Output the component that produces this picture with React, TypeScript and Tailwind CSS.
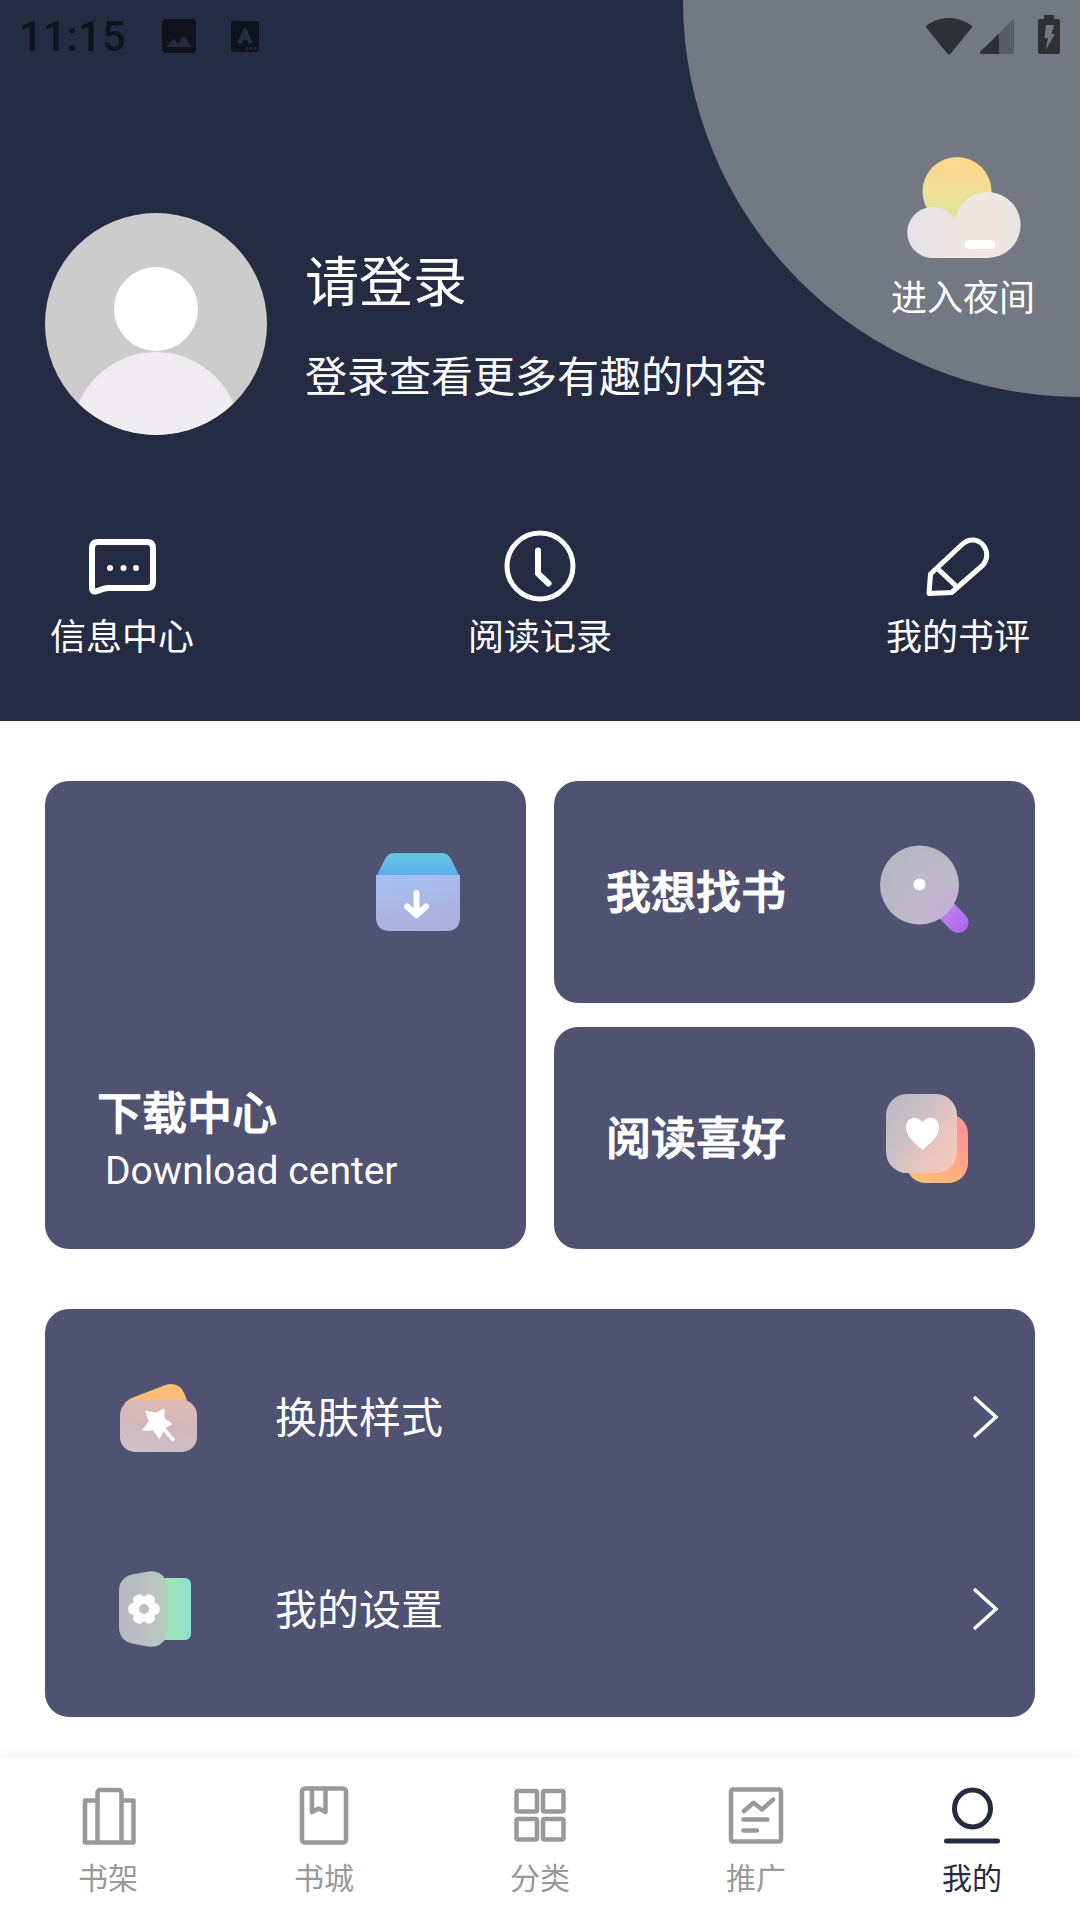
import { useState, type ReactNode } from "react";

function StatusBar() {
  return (
    <div className="flex h-[74px] items-center justify-between px-5">
      <div className="-ml-px flex items-center text-[#10121c]">
        <span className="w-[143px] text-[42px] font-medium leading-[48px]">11:15</span>
        <svg width="34" height="34" viewBox="0 1 34 34" className="overflow-visible">
          <path
            fill="currentColor"
            fillRule="evenodd"
            d="M4 0h26a4 4 0 0 1 4 4v26a4 4 0 0 1-4 4H4a4 4 0 0 1-4-4V4a4 4 0 0 1 4-4Zm.5 28h25L22 17.500l-6 7.500-4.500-5.500Z"
          />
        </svg>
        <svg className="ml-[35px] overflow-visible" width="28" height="31" viewBox="0 1 28 31">
          <rect width="28" height="31" rx="3" fill="currentColor" />
          <path d="M9 21 14 9l5 12M10.500 17h7" fill="none" stroke="#272c45" strokeWidth="4" strokeLinecap="round" strokeLinejoin="round" />
          <path d="M15 26h2.500v2.500H15ZM19 26h2.500v2.500H19ZM23 26h2.500v2.500H23Z" fill="#272c45" />
        </svg>
      </div>
      <div className="flex items-center text-[#2e3034]">
        <svg width="46" height="37" viewBox="0 1 46 37" className="overflow-visible">
          <path fill="currentColor" d="M.6 7.500C14-2.500 32-2.500 45.400 7.500c.8.700.8 1.500.3 2.200L24.500 35.700c-.8 1-2.200 1-3 0L.3 9.700C-.2 9-.2 8.200.6 7.500Z" />
        </svg>
        <svg className="ml-2" width="34" height="34" viewBox="0 0 34 34">
          <path fill="#575c66" d="M19 13.500 31.500.8c1-1 2.500-.4 2.500.9V32a2 2 0 0 1-2 2H19Z" />
          <path fill="currentColor" d="M19 13.500V34H1.500C0 34-.5 32.500.5 31.500Z" />
        </svg>
        <svg className="ml-6 overflow-visible" width="22" height="39" viewBox="0 3 22 39">
          <path fill="currentColor" d="M6 0h10v4h4a2 2 0 0 1 2 2v31a2 2 0 0 1-2 2H2a2 2 0 0 1-2-2V6a2 2 0 0 1 2-2h4Z" />
          <path fill="#737882" d="M8 10h8l-2.500 9h3.500L7.500 35 10 23H6.500Z" />
        </svg>
      </div>
    </div>
  );
}

function WeatherIcon() {
  return (
    <svg className="overflow-visible" width="113" height="101" viewBox="-1 0 113 101">
      <defs>
        <linearGradient id="sun" x1="0" y1="0" x2="0" y2="1">
          <stop offset="0" stopColor="#ffd78c" />
          <stop offset="1" stopColor="#dbe79d" />
        </linearGradient>
        <linearGradient id="cloud" x1="0" y1="0" x2="1" y2="0">
          <stop offset="0" stopColor="#e6e1eb" />
          <stop offset=".4" stopColor="#ebe7e2" />
          <stop offset=".75" stopColor="#f0e6df" />
          <stop offset="1" stopColor="#e8e3e4" />
        </linearGradient>
      </defs>
      <circle cx="50" cy="34.500" r="34.500" fill="url(#sun)" />
      <path d="M25.500 101A25.500 25.500 0 1 1 48 63 33 33 0 1 1 80 101Z" fill="url(#cloud)" />
      <rect x="58" y="83" width="30" height="9" rx="4.500" fill="#fffffb" />
    </svg>
  );
}

function Avatar() {
  return (
    <svg className="shrink-0 rounded-full bg-[#cccccc]" width="222" height="222" viewBox="0 0 222 222">
      <circle cx="111" cy="96" r="42" fill="#fff" />
      <circle cx="111" cy="223" r="84" fill="#eeecef" />
    </svg>
  );
}

function MessageIcon() {
  return (
    <svg width="67" height="72" viewBox="0 -9 67 72" fill="none" stroke="currentColor" strokeWidth="6">
      <path d="M3 9Q3 3 9 3H58Q64 3 64 9V43Q64 49 58 49H20C13 49 10 52 6.500 52.500Q3 53 3 49Z" />
      <path d="M21 29h.01M34.500 29h.01M47 29h.01" strokeLinecap="round" />
    </svg>
  );
}

function ClockIcon() {
  return (
    <svg width="72" height="72" viewBox="0 0 72 72" fill="none" stroke="currentColor">
      <circle cx="36" cy="36" r="33" strokeWidth="5" />
      <path d="M34 20.500v23l10.500 10" strokeWidth="6" strokeLinecap="round" strokeLinejoin="round" />
    </svg>
  );
}

function PencilIcon() {
  return (
    <svg width="64" height="72" viewBox="0 -7 64 72" fill="none" stroke="currentColor" strokeWidth="5" strokeLinejoin="round">
      <path d="M3 56.500 4.500 37 36 7.500C43 1 52 2 57 8C62 14 62 22 57 28L25.500 55.500ZM11.500 31.500 31 50" />
    </svg>
  );
}

function DownloadIcon() {
  return (
    <svg width="86" height="80" viewBox="0 0 86 80">
      <defs>
        <linearGradient id="lid" x1="0" y1="0" x2="0" y2="1">
          <stop offset="0" stopColor="#61cbdf" />
          <stop offset="1" stopColor="#5facea" />
        </linearGradient>
        <linearGradient id="box" x1="0" y1="0" x2=".3" y2="1">
          <stop offset="0" stopColor="#a4c3f2" />
          <stop offset="1" stopColor="#aeaede" />
        </linearGradient>
      </defs>
      <path d="M2 23 10 7Q13 1 19 1H67Q73 1 76 7L84 23Z" fill="url(#lid)" />
      <path d="M1 23H85V65Q85 79 71 79H15Q1 79 1 65Z" fill="url(#box)" />
      <path d="M41.500 41v21M32 54.500l9.500 8.500 9.500-8.500" fill="none" stroke="#fff" strokeWidth="6" strokeLinecap="round" strokeLinejoin="round" />
    </svg>
  );
}

function SearchIcon() {
  return (
    <svg width="89" height="95" viewBox="0 0 89 95">
      <defs>
        <linearGradient id="handle" x1="60" y1="60" x2="84" y2="84" gradientUnits="userSpaceOnUse">
          <stop offset="0" stopColor="#bd8bea" />
          <stop offset="1" stopColor="#b065f3" />
        </linearGradient>
        <radialGradient id="lens" cx="70" cy="68" r="75" gradientUnits="userSpaceOnUse">
          <stop offset="0" stopColor="#c7addb" />
          <stop offset=".45" stopColor="#bfb9ca" />
          <stop offset="1" stopColor="#b6b7c3" />
        </radialGradient>
      </defs>
      <path d="M62 61 78 77.500" stroke="url(#handle)" strokeWidth="21" strokeLinecap="round" />
      <circle cx="39.500" cy="40" r="39.500" fill="url(#lens)" />
      <circle cx="39.500" cy="39.500" r="6" fill="#fff" />
    </svg>
  );
}

function HeartIcon() {
  return (
    <svg width="83" height="89" viewBox="0 0 83 89">
      <defs>
        <linearGradient id="heartBack" x1=".7" y1=".2" x2=".3" y2="1">
          <stop offset="0" stopColor="#ff9594" />
          <stop offset="1" stopColor="#ffbf75" />
        </linearGradient>
        <linearGradient id="heartFront" x1="0" y1=".1" x2="1" y2=".9">
          <stop offset="0" stopColor="#b9babf" />
          <stop offset=".35" stopColor="#c9bfc4" />
          <stop offset=".7" stopColor="#ebc6c0" />
          <stop offset="1" stopColor="#f7c8b4" />
        </linearGradient>
      </defs>
      <rect x="20" y="20" width="62" height="69" rx="20" fill="url(#heartBack)" />
      <rect width="71" height="79" rx="21" fill="url(#heartFront)" />
      <path d="M36.500 56C30 50 20 43 20 33.500C20 23 31.500 20.500 36.500 28.500C41.500 20.500 53 23 53 33.500C53 43 43 50 36.500 56Z" fill="#fff" />
    </svg>
  );
}

function SkinIcon() {
  return (
    <svg className="overflow-visible" width="77" height="68" viewBox="0 -1 77 68">
      <defs>
        <linearGradient id="skinFront" x1=".6" y1="0" x2=".4" y2="1">
          <stop offset="0" stopColor="#deb9b4" />
          <stop offset=".5" stopColor="#d2b8ba" />
          <stop offset="1" stopColor="#ccc0ca" />
        </linearGradient>
      </defs>
      <path d="M4 20Q7 16 13 13.500L44 1.500Q57-3 63 7Q66 12 67.500 20Z" fill="#fdbb78" />
      <rect y="16" width="77" height="52" rx="15" fill="url(#skinFront)" />
      <path d="m25.700 27 9.300 2.300L44 25v9.300l7.700 5.700-7.400 4.300-5 10.400-6-8.700H22.700l6.600-8.300Z" fill="#fff" stroke="#fff" strokeLinejoin="round" />
      <path d="M42 43 53 55.500" stroke="#fff" strokeWidth="3.500" strokeLinecap="round" />
    </svg>
  );
}

function SettingsIcon() {
  return (
    <svg className="overflow-visible" width="72" height="76" viewBox="1 0 72 76">
      <defs>
        <linearGradient id="setBack" x1=".4" y1="0" x2="1" y2="0">
          <stop offset="0" stopColor="#a3e5b4" />
          <stop offset="1" stopColor="#8fe2d0" />
        </linearGradient>
        <linearGradient id="setFront" x1="0" y1="0" x2="1" y2="0">
          <stop offset="0" stopColor="#b7b9c1" />
          <stop offset=".7" stopColor="#bcc4c2" />
          <stop offset="1" stopColor="#b3cfbd" />
        </linearGradient>
      </defs>
      <rect x="26" y="7" width="46" height="62" rx="6" fill="url(#setBack)" />
      <path d="M0 20Q0 7 13 3.500L29 .5Q41-1 46 8Q49 12 49 18V58Q49 64 46 68Q41 77 29 75.500L13 72.500Q0 69 0 56Z" fill="url(#setFront)" />
      {/* three crossed bars give the six teeth of the gear */}
      <g fill="#fff">
        <circle cx="25" cy="38" r="12.500" />
        <rect x="9.300" y="32.500" width="31.400" height="11" rx="4.500" />
        <rect x="9.300" y="32.500" width="31.400" height="11" rx="4.500" transform="rotate(60 25 38)" />
        <rect x="9.300" y="32.500" width="31.400" height="11" rx="4.500" transform="rotate(120 25 38)" />
      </g>
      <circle cx="25" cy="38" r="5" fill="#bcc0c2" />
    </svg>
  );
}

function TabIcon({ children }: { children: ReactNode }) {
  return (
    <svg width="60" height="60" viewBox="0 0 60 60" fill="none" stroke="currentColor" strokeWidth="4.500" strokeLinecap="round" strokeLinejoin="round">
      {children}
    </svg>
  );
}

const shortcuts = [
  { label: "信息中心", icon: <MessageIcon /> },
  { label: "阅读记录", icon: <ClockIcon /> },
  { label: "我的书评", icon: <PencilIcon /> },
];

const rows = [
  { label: "换肤样式", icon: <SkinIcon /> },
  { label: "我的设置", icon: <SettingsIcon /> },
];

const tabs = [
  {
    label: "书架",
    icon: (
      <>
        <rect x="19.500" y="4" width="24" height="52.500" rx="2.500" />
        <path d="M19.500 14.500H7v42h12.500M43.500 14.500H55.500v42H43.500" />
      </>
    ),
  },
  {
    label: "书城",
    icon: (
      <>
        <rect x="8" y="2.500" width="44" height="54" rx="3" />
        <path d="M18 2.500V26l6.700-3.500 6.800 3.500V2.500" />
      </>
    ),
  },
  {
    label: "分类",
    icon: (
      <>
        <rect x="6.500" y="5" width="20.500" height="20.500" rx="1.500" />
        <rect x="33" y="5" width="20.500" height="20.500" rx="1.500" />
        <rect x="6.500" y="33" width="20.500" height="20.500" rx="1.500" />
        <rect x="33" y="33" width="20.500" height="20.500" rx="1.500" />
      </>
    ),
  },
  {
    label: "推广",
    icon: (
      <>
        <rect x="5" y="3.500" width="50" height="52" rx="2" />
        <path d="M18 25l9.500-8.200 8.500 6.800 11-10M17.500 33.500h24M17.500 44.500H31" />
      </>
    ),
  },
  {
    label: "我的",
    icon: (
      <>
        <ellipse cx="30.500" cy="22.500" rx="18" ry="18.500" strokeWidth="5" />
        <path d="M4.500 55h51" strokeWidth="5" />
      </>
    ),
  },
];

function App() {
  const [active, setActive] = useState("我的");

  return (
    <div className="flex min-h-screen flex-col bg-white font-['Roboto','Noto_Sans_CJK_SC',sans-serif]" lang="zh-CN">
      <header className="relative overflow-hidden bg-[#262b44] pb-[59px] text-white">
        <div className="absolute -right-[397px] -top-[397px] size-[794px] rounded-full bg-[#737882]" />
        <div className="relative">
          <StatusBar />

          <div className="mt-[83px] flex items-start justify-between px-[45px]">
            <button type="button" className="mt-14 flex items-center gap-[38px] text-left">
              <Avatar />
              <span className="flex flex-col gap-[34px] pt-2.5">
                <span className="text-[54px] leading-[64px]">请登录</span>
                <span className="text-[42px] leading-[56px]">登录查看更多有趣的内容</span>
              </span>
            </button>
            <button type="button" className="flex flex-col items-center gap-[17px]">
              <WeatherIcon />
              <span className="text-[36px] leading-[48px]">进入夜间</span>
            </button>
          </div>

          <div className="mt-[95px] flex justify-between px-[50px]">
            {shortcuts.map((item) => (
              <button key={item.label} type="button" className="flex flex-col items-center gap-3">
                {item.icon}
                <span className="text-[36px] leading-[48px]">{item.label}</span>
              </button>
            ))}
          </div>
        </div>
      </header>

      <main className="flex-1 px-[45px] pb-10 pt-[60px] text-white">
        <div className="grid grid-cols-2 gap-x-7 gap-y-6">
          <button type="button" className="row-span-2 flex flex-col justify-between rounded-3xl bg-[#4f5271] pb-[52px] pl-[52px] pr-[65px] pt-[71px] text-left">
            <span className="self-end">
              <DownloadIcon />
            </span>
            <span className="flex flex-col">
              <span className="text-[45px] font-medium leading-[60px] [-webkit-text-stroke:1px_white]">下载中心</span>
              <span className="pl-2 text-[39px] leading-[52px]">Download center</span>
            </span>
          </button>
          <button type="button" className="flex h-[222px] items-center justify-between rounded-3xl bg-[#4f5271] pl-[52px] pr-[66px]">
            <span className="pt-1 text-[45px] font-medium leading-[60px] [-webkit-text-stroke:1px_white]">我想找书</span>
            <SearchIcon />
          </button>
          <button type="button" className="flex h-[222px] items-center justify-between rounded-3xl bg-[#4f5271] pl-[52px] pr-[66px]">
            <span className="pt-1 text-[45px] font-medium leading-[60px] [-webkit-text-stroke:1px_white]">阅读喜好</span>
            <HeartIcon />
          </button>
        </div>

        <div className="mt-[60px] rounded-3xl bg-[#4f5271] py-3">
          {rows.map((row) => (
            <button key={row.label} type="button" className="flex h-48 w-full items-center pl-[75px] pr-9">
              <span className="w-[155px]">{row.icon}</span>
              <span className="pt-1 text-[42px] leading-[56px]">{row.label}</span>
              <svg className="ml-auto" width="28" height="44" viewBox="0 0 28 44" fill="none" stroke="currentColor" strokeWidth="3.500">
                <path d="M3 2 25 22 3 42" />
              </svg>
            </button>
          ))}
        </div>
      </main>

      <nav className="sticky bottom-0 grid grid-cols-5 bg-white pb-[17px] pt-7 shadow-[0_0_14px_rgba(0,0,0,0.08)]">
        {tabs.map((tab) => (
          <button
            key={tab.label}
            type="button"
            onClick={() => setActive(tab.label)}
            className={`flex flex-col items-center gap-[9px] ${active === tab.label ? "text-[#262b44]" : "text-[#999999]"}`}
          >
            <TabIcon>{tab.icon}</TabIcon>
            <span className="text-[30px] leading-[48px]">{tab.label}</span>
          </button>
        ))}
      </nav>
    </div>
  );
}

export default App;
